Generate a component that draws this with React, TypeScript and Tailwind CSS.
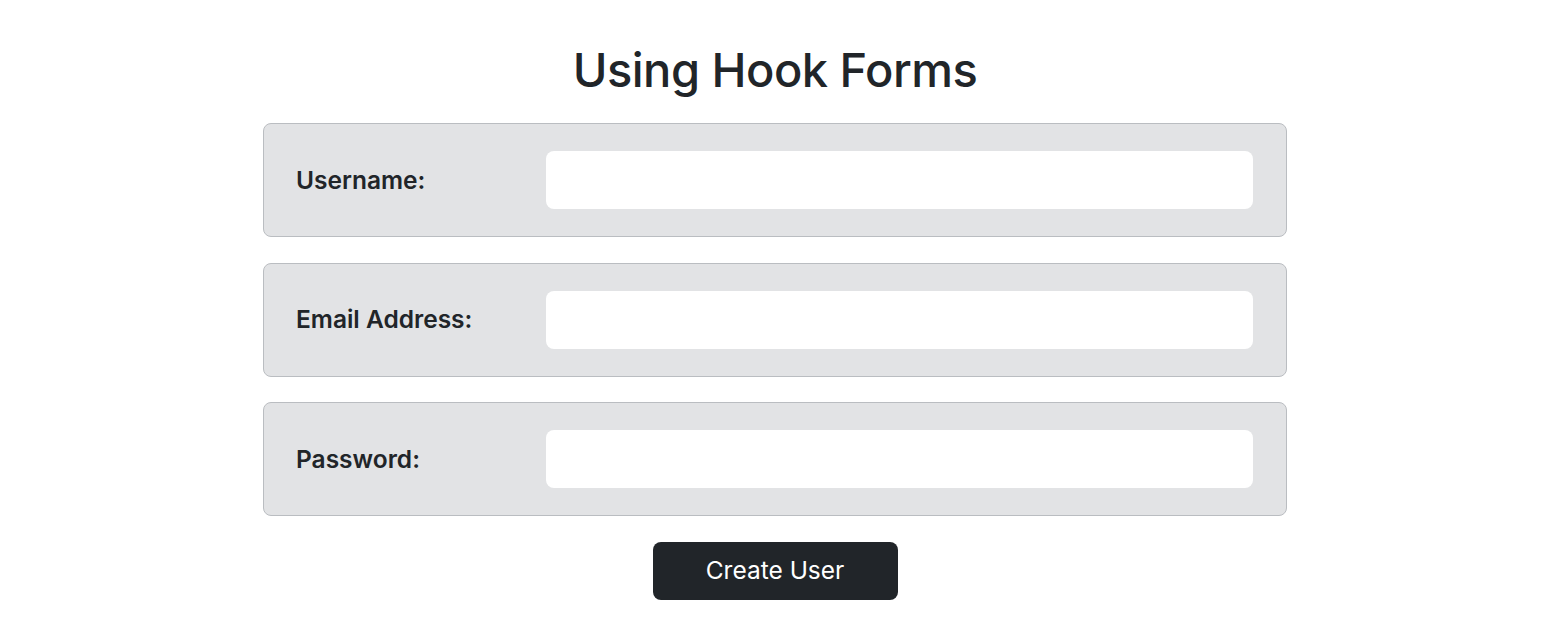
const fields = [
  { label: "Username:", type: "text" },
  { label: "Email Address:", type: "email" },
  { label: "Password:", type: "password" },
];

export default function App() {
  return (
    <div className="min-h-screen bg-white font-['Inter',sans-serif] text-[#212529]">
      <div className="mx-auto w-[1024px] pt-[39px]">
        <h1 className="text-center text-[47px] font-medium leading-[62px] tracking-[-0.5px]">
          Using Hook Forms
        </h1>
        <form className="mt-[22px] flex flex-col gap-[25.6px]">
          {fields.map((f) => (
            <div
              key={f.label}
              className="flex h-[114px] items-center rounded-[8px] border border-[#babdc1] bg-[#e2e3e5] pl-[32px] pr-[33px]"
            >
              <label className="w-[250px] text-[24.5px] font-semibold">{f.label}</label>
              <input
                type={f.type}
                className="h-[58px] flex-1 rounded-[8px] border-0 bg-white px-4 outline-none"
              />
            </div>
          ))}
          <div className="flex justify-center">
            <button
              type="button"
              className="h-[58px] w-[245px] rounded-[8px] bg-[#212529] text-[24.5px] text-white"
            >
              Create User
            </button>
          </div>
        </form>
      </div>
    </div>
  );
}
